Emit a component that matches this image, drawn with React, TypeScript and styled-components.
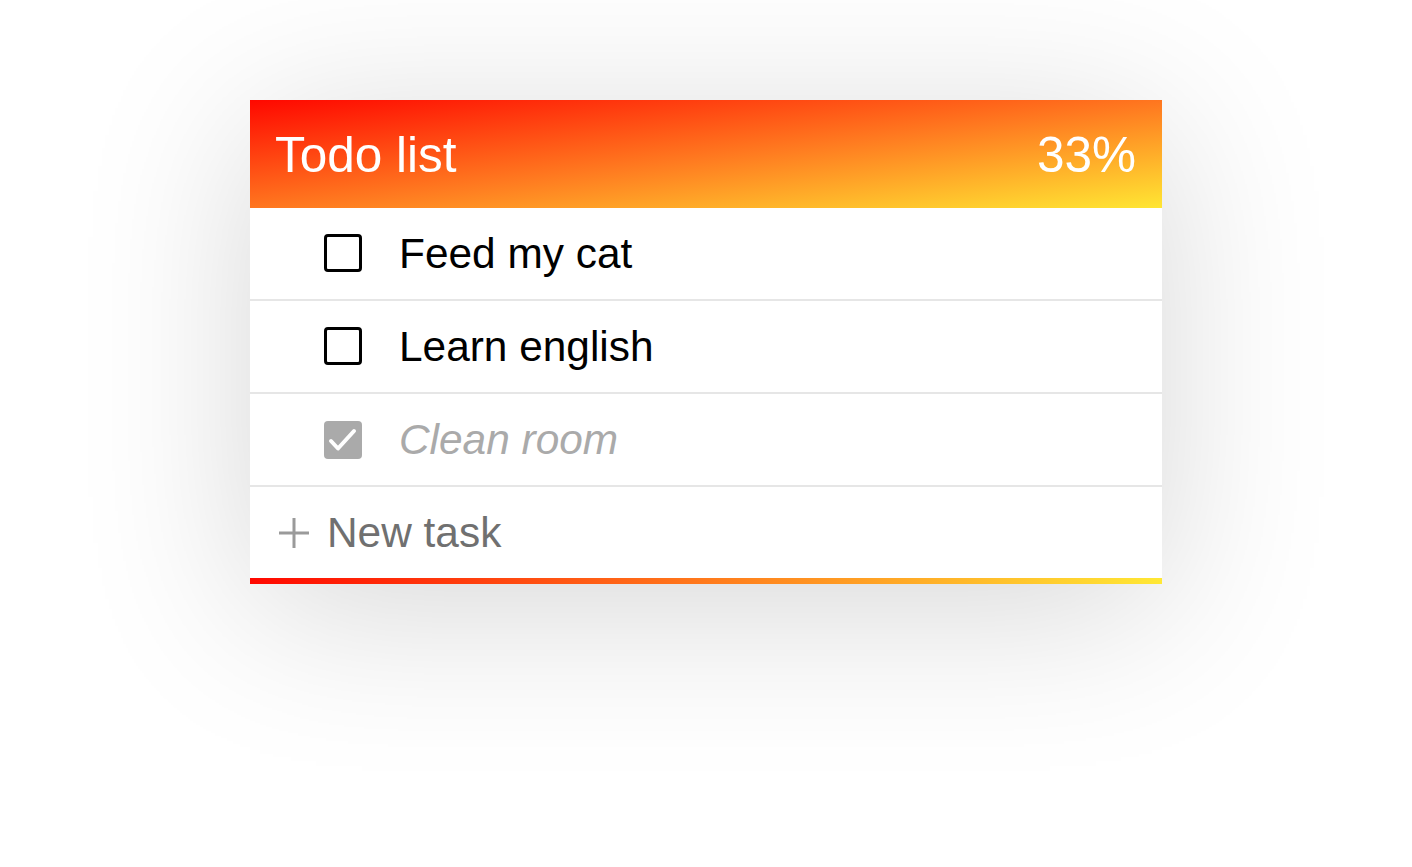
import React from "react";
import styled, { createGlobalStyle } from "styled-components";

const GlobalStyle = createGlobalStyle`
  html, body {
    margin: 0;
    padding: 0;
    background: #ffffff;
  }
  body {
    font-family: "Liberation Sans", Arial, sans-serif;
  }
`;

const Page = styled.div`
  display: flex;
  justify-content: center;
  align-items: flex-start;
  padding-top: 100px;
  min-height: 867px;
  box-sizing: border-box;
`;

const Card = styled.div`
  width: 912px;
  display: flex;
  flex-direction: column;
  background: #ffffff;
  box-shadow: 0 25px 160px rgba(0, 0, 0, 0.16);
`;

const Header = styled.header`
  height: 108px;
  box-sizing: border-box;
  display: flex;
  align-items: center;
  justify-content: space-between;
  padding: 0 26px 0 25px;
  background: linear-gradient(to bottom right, #ff0800 0%, #ff7a20 52%, #ffe633 100%);
  color: #ffffff;
  font-size: 49.5px;
`;

const Title = styled.h1`
  margin: 0;
  font-size: inherit;
  font-weight: 400;
`;

const Percent = styled.span`
  font-size: inherit;
`;

const TaskList = styled.ul`
  list-style: none;
  margin: 0;
  padding: 0;
`;

const TaskRow = styled.li`
  height: 93px;
  box-sizing: border-box;
  display: flex;
  align-items: center;
  gap: 37px;
  padding-left: 74px;
  border-bottom: 2px solid #e6e6e6;
`;

const Box = styled.span<{ $checked: boolean }>`
  width: 38px;
  height: 38px;
  box-sizing: border-box;
  flex: none;
  display: flex;
  align-items: center;
  justify-content: center;
  border-radius: 4px;
  border: ${(p) => (p.$checked ? "none" : "3.5px solid #000000")};
  background: ${(p) => (p.$checked ? "#aaaaaa" : "#ffffff")};
  margin-top: ${(p) => (p.$checked ? "1px" : "-1px")};
`;

const TaskText = styled.span<{ $done: boolean }>`
  font-size: 42.4px;
  color: ${(p) => (p.$done ? "#aaaaaa" : "#000000")};
  font-style: ${(p) => (p.$done ? "italic" : "normal")};
`;

const AddRow = styled.div`
  height: 91px;
  box-sizing: border-box;
  display: flex;
  align-items: center;
  gap: 18px;
  padding-left: 29px;
  color: #707070;
  font-size: 42.4px;
`;

const PlusIcon = styled.svg`
  width: 30px;
  height: 30px;
  flex: none;
`;

const BottomBar = styled.div`
  height: 6px;
  background: linear-gradient(to right, #ff0800, #ff7a1c 50%, #ffe835);
`;

type Task = { label: string; done: boolean };

const tasks: Task[] = [
  { label: "Feed my cat", done: false },
  { label: "Learn english", done: false },
  { label: "Clean room", done: true },
];

const Check = () => (
  <svg width="38" height="38" viewBox="0 0 38 38">
    <polyline
      points="7,20 14,27.5 30,10"
      fill="none"
      stroke="#ffffff"
      strokeWidth="4"
      strokeLinecap="round"
      strokeLinejoin="round"
    />
  </svg>
);

export default function App() {
  const doneCount = tasks.filter((t) => t.done).length;
  const pct = Math.floor((doneCount / tasks.length) * 100);
  return (
    <>
      <GlobalStyle />
      <Page>
        <Card>
          <Header>
            <Title>Todo list</Title>
            <Percent>{pct}%</Percent>
          </Header>
          <TaskList>
            {tasks.map((t) => (
              <TaskRow key={t.label}>
                <Box $checked={t.done}>{t.done && <Check />}</Box>
                <TaskText $done={t.done}>{t.label}</TaskText>
              </TaskRow>
            ))}
          </TaskList>
          <AddRow>
            <PlusIcon viewBox="0 0 30 30">
              <rect x="0" y="13.5" width="30" height="3" fill="#9a9a9a" />
              <rect x="13.5" y="0" width="3" height="30" fill="#9a9a9a" />
            </PlusIcon>
            <span>New task</span>
          </AddRow>
          <BottomBar />
        </Card>
      </Page>
    </>
  );
}
